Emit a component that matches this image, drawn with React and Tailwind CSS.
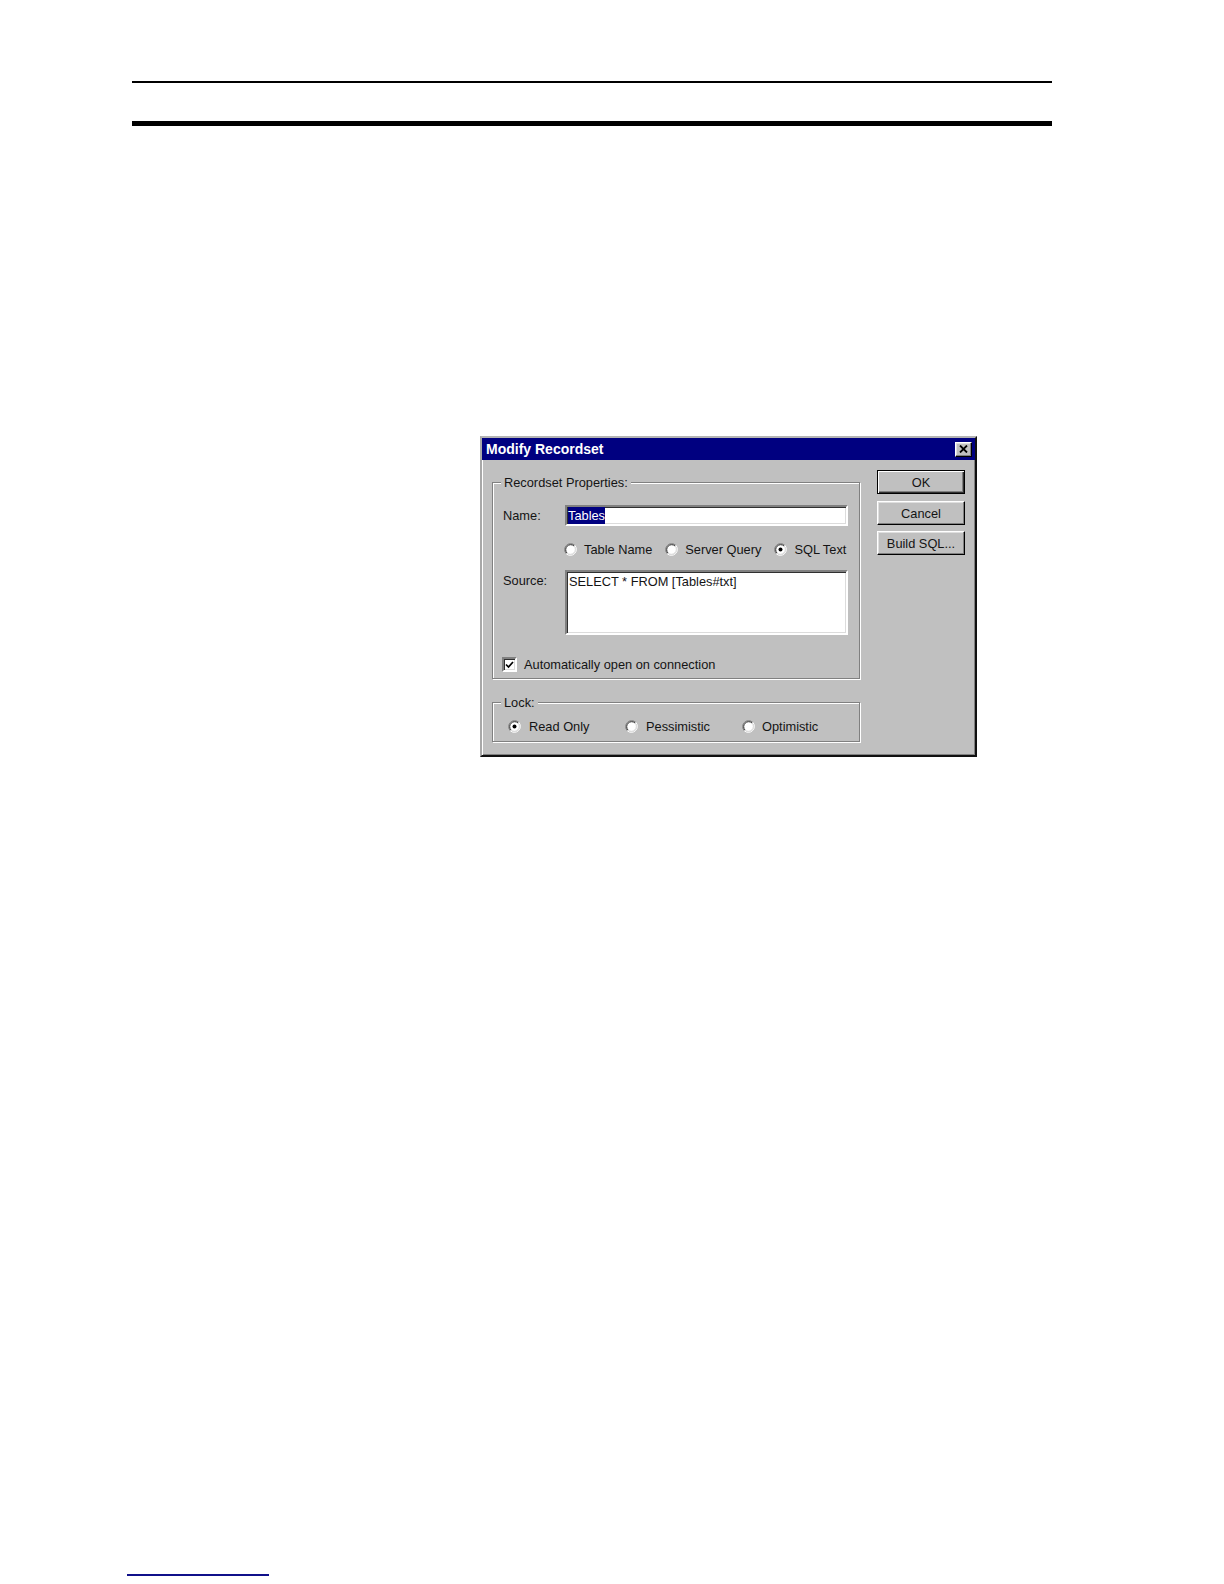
import React from "react";

function Radio({ checked }) {
  return (
    <svg width="13" height="13" viewBox="0 0 13 13" className="shrink-0">
      <circle cx="6.5" cy="6.5" r="5" fill="#ffffff" />
      <path d="M 10.74 2.26 A 6 6 0 0 0 2.26 10.74" fill="none" stroke="#808080" strokeWidth="1" />
      <path d="M 10.03 2.97 A 5 5 0 0 0 2.97 10.03" fill="none" stroke="#303030" strokeWidth="1" />
      <path d="M 10.74 2.26 A 6 6 0 0 1 2.26 10.74" fill="none" stroke="#ffffff" strokeWidth="1" />
      <path d="M 10.03 2.97 A 5 5 0 0 1 2.97 10.03" fill="none" stroke="#dcdcdc" strokeWidth="1" />
      {checked && <circle cx="6.5" cy="6.5" r="2" fill="#000000" />}
    </svg>
  );
}

function RadioItem({ checked, label, className = "", gap = "gap-[7px]" }) {
  return (
    <div className={`flex items-center ${gap} ${className}`}>
      <Radio checked={checked} />
      <span className="leading-[15px] whitespace-nowrap">{label}</span>
    </div>
  );
}

function Group({ label, className = "", children }) {
  return (
    <div
      className={`relative border border-[#808080] shadow-[inset_1px_1px_0_#ffffff,1px_1px_0_#ffffff] ${className}`}
    >
      <span className="absolute left-[8px] -top-[8px] bg-[#c0c0c0] px-[3px] leading-[15px] whitespace-nowrap">
        {label}
      </span>
      {children}
    </div>
  );
}

const sunken =
  "border-2 border-t-[#808080] border-l-[#808080] border-r-white border-b-white shadow-[inset_1px_1px_0_#303030,inset_-1px_-1px_0_#dcdcdc] bg-white";

const raised =
  "border border-t-white border-l-white border-r-black border-b-black shadow-[inset_-1px_-1px_0_#808080,inset_1px_1px_0_#dfdfdf]";

export default function App() {
  return (
    <div className="w-[1224px] min-h-[1584px] bg-white flex flex-col items-start font-['Liberation_Sans',Arial,sans-serif] text-[12.8px] text-[#141414]">
      <div className="ml-[132px] mt-[81px] w-[920px] h-[2px] bg-black" />
      <div className="ml-[132px] mt-[38px] w-[920px] h-[5px] bg-black" />

      {/* Dialog */}
      <div className="ml-[480px] mt-[310px] w-[497px] bg-[#c0c0c0] border-2 border-t-[#b4b4b4] border-l-[#a8a8a8] border-r-[#101010] border-b-[#101010] shadow-[inset_1px_1px_0_#ffffff,inset_-1px_-1px_0_#808080]">
        {/* Title bar */}
        <div className="h-[22px] bg-[#000080] flex items-center justify-between pl-[4px] pr-[3px]">
          <span className="text-white font-bold text-[14px] leading-none">Modify Recordset</span>
          <div className={`w-[17px] h-[15px] bg-[#c0c0c0] flex items-center justify-center ${raised}`}>
            <svg width="9" height="8" viewBox="0 0 9 8">
              <path d="M1 0.5 L8 7.5 M8 0.5 L1 7.5" stroke="#000" strokeWidth="1.8" fill="none" />
            </svg>
          </div>
        </div>

        {/* Body */}
        <div className="flex items-start pl-[10px] pr-[10px] pb-[13px]">
          {/* Left column */}
          <div className="w-[368px] pt-[22px] flex flex-col">
            <Group label="Recordset Properties:" className="pt-[22px] pl-[10px] pr-[11px] pb-[6px]">
              {/* Name */}
              <div className="flex items-center h-[21px]">
                <span className="w-[62px] leading-[15px]">Name:</span>
                <div className={`flex-1 h-[21px] ${sunken} flex items-stretch pl-[1px]`}>
                  <span className="bg-[#000080] text-white leading-[17px]">Tables</span>
                </div>
              </div>

              {/* Radios */}
              <div className="mt-[15px] h-[16px] flex items-center pl-[61px] gap-[13px]">
                <RadioItem label="Table Name" />
                <RadioItem label="Server Query" />
                <RadioItem label="SQL Text" checked />
              </div>

              {/* Source */}
              <div className="mt-[13px] flex items-start">
                <span className="w-[62px] pt-[3px] leading-[15px]">Source:</span>
                <div className={`flex-1 h-[65px] ${sunken} pl-[2px] pt-[2px] leading-[15px]`}>
                  SELECT * FROM [Tables#txt]
                </div>
              </div>

              {/* Checkbox */}
              <div className="mt-[22px] h-[15px] flex items-center -ml-[1px] gap-[7px]">
                <div className={`w-[15px] h-[15px] ${sunken} flex items-center justify-center`}>
                  <svg width="9" height="8" viewBox="0 0 9 8">
                    <path d="M1 3.5 L3.5 6 L8 1" stroke="#000" strokeWidth="1.7" fill="none" />
                  </svg>
                </div>
                <span className="leading-[15px] whitespace-nowrap">Automatically open on connection</span>
              </div>
            </Group>

            <Group label="Lock:" className="mt-[23px] pt-[15px] pb-[7px] pl-[15px]">
              <div className="h-[16px] flex items-center">
                <RadioItem label="Read Only" checked className="w-[117px]" gap="gap-[8px]" />
                <RadioItem label="Pessimistic" className="w-[117px]" gap="gap-[8px]" />
                <RadioItem label="Optimistic" className="w-[117px]" gap="gap-[7px]" />
              </div>
            </Group>
          </div>

          {/* Right column: buttons */}
          <div className="ml-[17px] w-[89px] pt-[10px] flex flex-col">
            <div className="h-[24px] w-full border border-black shadow-[inset_1px_1px_0_#ffffff,inset_-1px_-1px_0_#303030,inset_-2px_-2px_0_#808080] flex items-center justify-center leading-[15px]">
              OK
            </div>
            <div className={`mt-[7px] h-[24px] w-full ${raised} flex items-center justify-center leading-[15px]`}>
              Cancel
            </div>
            <div className={`mt-[6px] h-[24px] w-full ${raised} flex items-center justify-center leading-[15px]`}>
              Build SQL...
            </div>
          </div>
        </div>
      </div>

      <div className="ml-[127px] mt-[817px] w-[142px] h-[2px] bg-[#10108a]" />
    </div>
  );
}
